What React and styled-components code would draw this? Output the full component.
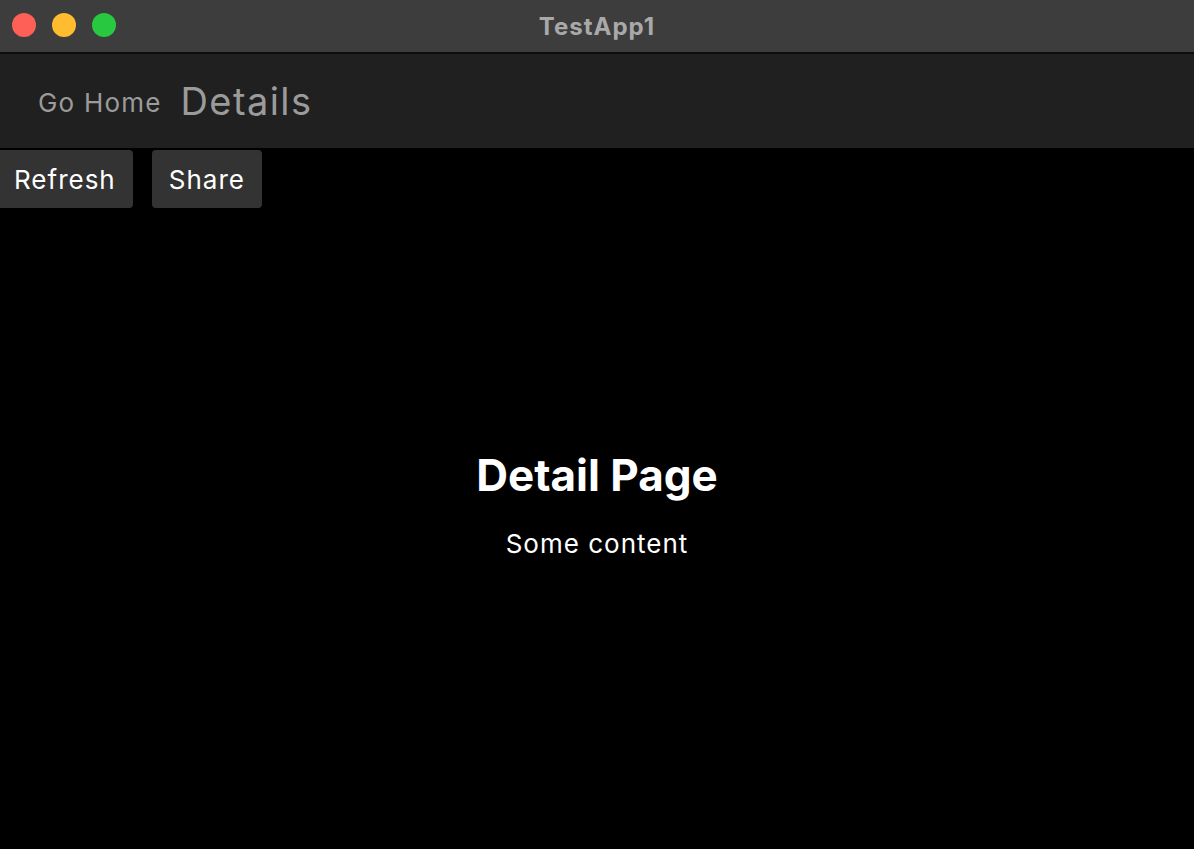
import React from "react";
import styled, { createGlobalStyle } from "styled-components";

const Global = createGlobalStyle`
  html, body { margin: 0; padding: 0; background: #000; }
  body { font-family: Inter, "Noto Sans", sans-serif; }
  #root { min-height: 100vh; }
`;

const Window = styled.div`
  display: flex;
  flex-direction: column;
  width: 1194px;
  height: 849px;
  background: #000;
  overflow: hidden;
`;

const TitleBar = styled.div`
  position: relative;
  height: 52px;
  flex: none;
  background: #3d3d3d;
  border-bottom: 2px solid #0c0c0c;
  display: flex;
  align-items: center;
  justify-content: center;
`;

const Lights = styled.div`
  position: absolute;
  left: 12px;
  top: 13px;
  display: flex;
  gap: 16px;
`;

const Light = styled.span`
  width: 24px;
  height: 24px;
  border-radius: 50%;
  background: ${(p) => p.$color};
`;

const Title = styled.div`
  font-family: Inter, "Noto Sans", sans-serif;
  font-weight: 700;
  font-size: 24px;
  color: #a9a9a9;
  letter-spacing: 1px;
`;

const NavBar = styled.div`
  height: 94px;
  flex: none;
  background: #202020;
  display: flex;
  align-items: center;
  padding: 0 0 0 38px;
  gap: 19px;
`;

const NavLink = styled.span`
  font-size: 26px;
  letter-spacing: 1.2px;
  color: #9b9b9b;
  margin-top: 2px;
`;

const NavTitle = styled.span`
  font-size: 38px;
  letter-spacing: 1.4px;
  color: #9b9b9b;
`;

const Toolbar = styled.div`
  display: flex;
  gap: 19px;
  padding-top: 2px;
  margin-left: -3px;
  flex: none;
`;

const Button = styled.button`
  height: 58px;
  padding: 0 17px;
  border: none;
  border-radius: 4px;
  background: #333333;
  color: #ffffff;
  font-family: Inter, "Noto Sans", sans-serif;
  font-size: 26px;
  letter-spacing: 1px;
`;

const Content = styled.div`
  flex: 1;
  display: flex;
  flex-direction: column;
  align-items: center;
  justify-content: center;
  padding-bottom: 50px;
`;

const Heading = styled.h1`
  margin: 0;
  font-size: 44px;
  font-weight: 700;
  color: #fff;
`;

const Body = styled.p`
  margin: 26px 0 0;
  font-size: 26px;
  letter-spacing: 1px;
  color: #fff;
`;

export default function App() {
  return (
    <>
      <Global />
      <Window>
        <TitleBar>
          <Lights>
            <Light $color="#fe5f57" />
            <Light $color="#febc2e" />
            <Light $color="#28c840" />
          </Lights>
          <Title>TestApp1</Title>
        </TitleBar>
        <NavBar>
          <NavLink>Go Home</NavLink>
          <NavTitle>Details</NavTitle>
        </NavBar>
        <Toolbar>
          <Button>Refresh</Button>
          <Button>Share</Button>
        </Toolbar>
        <Content>
          <Heading>Detail Page</Heading>
          <Body>Some content</Body>
        </Content>
      </Window>
    </>
  );
}
